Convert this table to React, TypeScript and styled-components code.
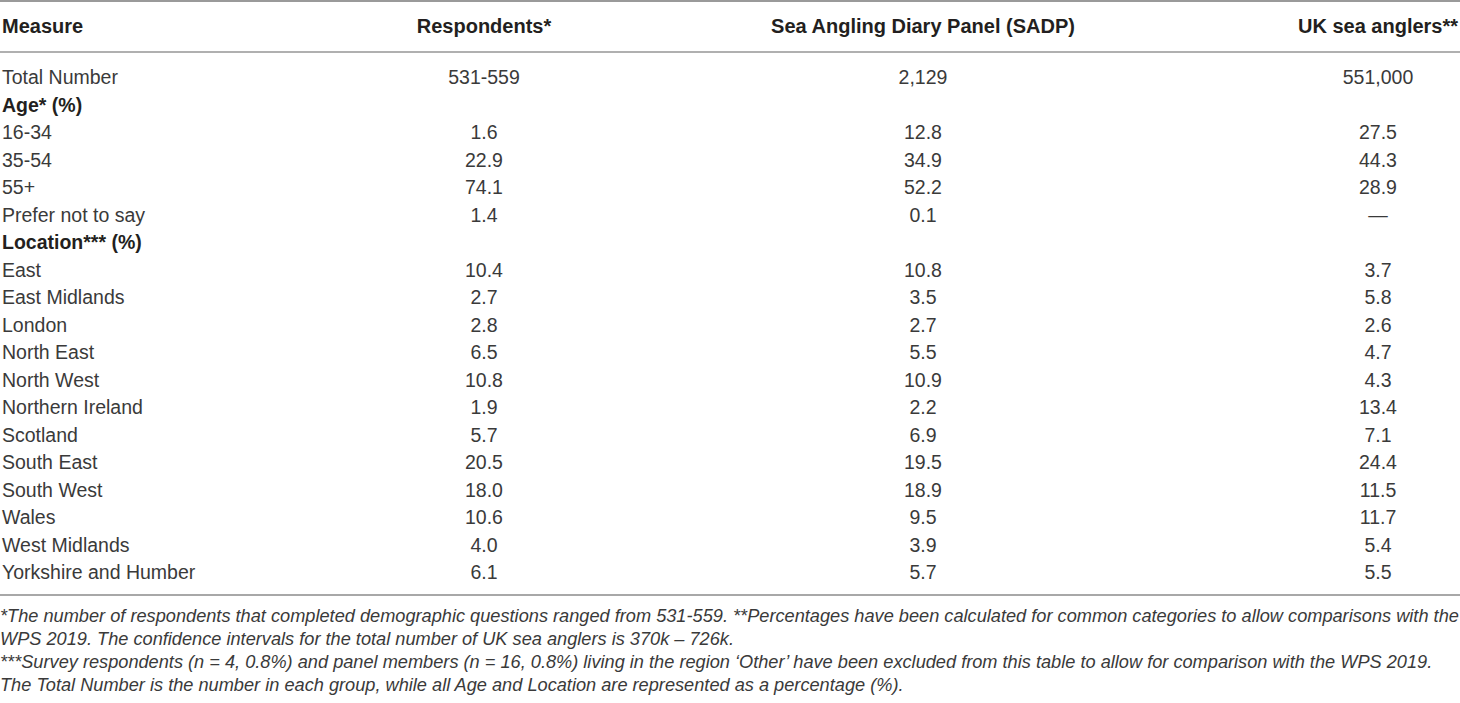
import React from 'react'
import styled, { createGlobalStyle } from 'styled-components'

const GlobalStyle = createGlobalStyle`
    html, body {
        margin: 0;
        padding: 0;
        background: #fff;
    }
    body {
        font-family: "Liberation Sans", Arial, Helvetica, sans-serif;
        color: #333;
    }
`

const COLS = '418px 132px 746px 164px'

type RowData = { label: string; bold?: boolean; values?: [string, string, string] }

const rows: RowData[] = [
    { label: 'Total Number', values: ['531-559', '2,129', '551,000'] },
    { label: 'Age* (%)', bold: true },
    { label: '16-34', values: ['1.6', '12.8', '27.5'] },
    { label: '35-54', values: ['22.9', '34.9', '44.3'] },
    { label: '55+', values: ['74.1', '52.2', '28.9'] },
    { label: 'Prefer not to say', values: ['1.4', '0.1', '—'] },
    { label: 'Location*** (%)', bold: true },
    { label: 'East', values: ['10.4', '10.8', '3.7'] },
    { label: 'East Midlands', values: ['2.7', '3.5', '5.8'] },
    { label: 'London', values: ['2.8', '2.7', '2.6'] },
    { label: 'North East', values: ['6.5', '5.5', '4.7'] },
    { label: 'North West', values: ['10.8', '10.9', '4.3'] },
    { label: 'Northern Ireland', values: ['1.9', '2.2', '13.4'] },
    { label: 'Scotland', values: ['5.7', '6.9', '7.1'] },
    { label: 'South East', values: ['20.5', '19.5', '24.4'] },
    { label: 'South West', values: ['18.0', '18.9', '11.5'] },
    { label: 'Wales', values: ['10.6', '9.5', '11.7'] },
    { label: 'West Midlands', values: ['4.0', '3.9', '5.4'] },
    { label: 'Yorkshire and Humber', values: ['6.1', '5.7', '5.5'] },
]

export default function App() {
    return (
        <>
            <GlobalStyle />
            <Wrapper>
                <HeadRow>
                    <HeadCell>Measure</HeadCell>
                    <HeadCell $center>Respondents*</HeadCell>
                    <HeadCell $center>Sea Angling Diary Panel (SADP)</HeadCell>
                    <HeadCell $center>UK sea anglers**</HeadCell>
                </HeadRow>
                <Body>
                    {rows.map(r => (
                        <Row key={r.label}>
                            <Cell $bold={r.bold}>{r.label}</Cell>
                            {r.values?.map((v, i) => (
                                <Cell key={i} $center>{v}</Cell>
                            ))}
                        </Row>
                    ))}
                </Body>
                <Notes>
                    <Note>
                        *The number of respondents that completed demographic questions ranged from 531-559. **Percentages have been calculated for common categories to allow comparisons with the
                        <br />
                        WPS 2019. The confidence intervals for the total number of UK sea anglers is 370k – 726k.
                    </Note>
                    <Note>
                        ***Survey respondents (n = 4, 0.8%) and panel members (n = 16, 0.8%) living in the region ‘Other’ have been excluded from this table to allow for comparison with the WPS 2019.
                    </Note>
                    <Note>
                        The Total Number is the number in each group, while all Age and Location are represented as a percentage (%).
                    </Note>
                </Notes>
            </Wrapper>
        </>
    )
}

const Wrapper = styled.div`
    width: 1460px;
`

const HeadRow = styled.div`
    display: grid;
    grid-template-columns: ${COLS};
    align-items: center;
    height: 49px;
    border-top: 2px solid #9a9a9a;
    border-bottom: 2px solid #b0b0b0;
`

const HeadCell = styled.div<{ $center?: boolean }>`
    font-size: 20px;
    font-weight: 700;
    color: #231f20;
    white-space: nowrap;
    padding-left: ${p => (p.$center ? '0' : '2px')};
    justify-self: ${p => (p.$center ? 'center' : 'start')};
`

const Body = styled.div`
    padding: 11px 0 7px;
    border-bottom: 2px solid #a8a8a8;
`

const Row = styled.div`
    display: grid;
    grid-template-columns: ${COLS};
    align-items: center;
    height: 27.5px;
`

const Cell = styled.div<{ $center?: boolean; $bold?: boolean }>`
    font-size: 19.5px;
    font-weight: ${p => (p.$bold ? 700 : 400)};
    color: ${p => (p.$bold ? '#231f20' : '#3a3a3a')};
    white-space: nowrap;
    padding-left: ${p => (p.$center ? '0' : '2px')};
    justify-self: ${p => (p.$center ? 'center' : 'start')};
`

const Notes = styled.div`
    padding-top: 9px;
`

const Note = styled.p`
    margin: 0;
    font-size: 18.2px;
    font-style: italic;
    line-height: 23px;
    color: #3a3a3a;
    white-space: nowrap;
`
